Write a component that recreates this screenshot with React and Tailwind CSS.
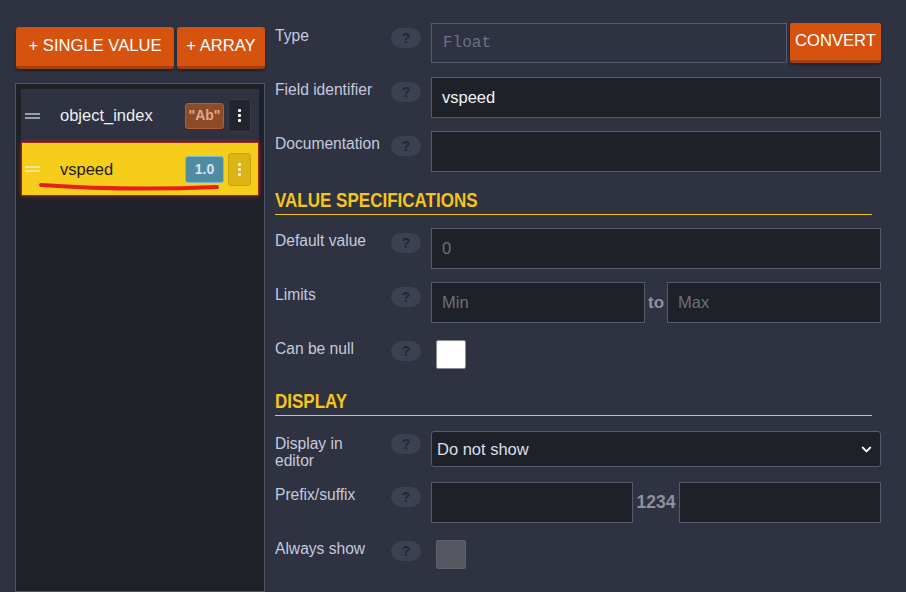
import React from "react";
import { ChevronDown } from "lucide-react";

function Pill({ className = "mt-[5px]" }) {
  return (
    <div
      className={
        "flex h-[20px] w-[30px] shrink-0 items-center justify-center rounded-full bg-[#3c4050] text-[14px] font-bold leading-none text-[#23262f] " +
        className
      }
    >
      ?
    </div>
  );
}

function Label({ children }) {
  return (
    <div className="w-[116px] shrink-0 pr-[5px] pt-[4px] text-[15.6px] leading-[17px] text-[#c5cadd]">
      {children}
    </div>
  );
}

function Input({ children, placeholder, className = "" }) {
  return (
    <div
      className={
        "flex h-[41px] items-center border border-[#555a70] bg-[#1f2129] px-[10px] text-[16.5px] " +
        className
      }
    >
      {children ? (
        <span className="text-[#f2f3f6]">{children}</span>
      ) : placeholder ? (
        <span className="text-[#6c6f78]">{placeholder}</span>
      ) : null}
    </div>
  );
}

function Heading({ children, className = "" }) {
  return (
    <div
      className={
        "mr-[9px] flex h-[30px] items-end border-b border-[#f5c51a] pb-[4px] " + className
      }
    >
      <span className="inline-block origin-bottom-left scale-x-[0.81] whitespace-nowrap text-[21px] font-bold leading-[20px] text-[#f5c51a]">
        {children}
      </span>
    </div>
  );
}

function Dots({ color }) {
  return (
    <div className="flex flex-col items-center gap-[2px]">
      <div className={"h-[3px] w-[3px] rounded-[1px] " + color} />
      <div className={"h-[3px] w-[3px] rounded-[1px] " + color} />
      <div className={"h-[3px] w-[3px] rounded-[1px] " + color} />
    </div>
  );
}

function Handle({ color }) {
  return (
    <div className="flex w-[15px] flex-col gap-[2px]">
      <div className={"h-[2px] w-full " + color} />
      <div className={"h-[2px] w-full " + color} />
    </div>
  );
}

export default function App() {
  return (
    <div className="flex h-[592px] w-[906px] overflow-hidden bg-[#2f3241] font-['Liberation_Sans',Arial,sans-serif]">
      {/* Left column */}
      <div className="ml-[15px] flex w-[250px] shrink-0 flex-col pt-[27px]">
        <div className="flex gap-[3px] pl-[1px]">
          <div className="flex h-[42px] w-[158px] items-center justify-center rounded-[3px] border-b-[3px] border-[#a5400c] bg-[#d5530f] text-[16.6px] text-white shadow-[0_2px_3px_rgba(0,0,0,0.35)]">
            + SINGLE VALUE
          </div>
          <div className="flex h-[42px] flex-1 items-center justify-center rounded-[3px] border-b-[3px] border-[#a5400c] bg-[#d5530f] text-[16.6px] text-white shadow-[0_2px_3px_rgba(0,0,0,0.35)]">
            + ARRAY
          </div>
        </div>
        <div className="mt-[14px] flex-1 border border-[#4d5369] bg-[#1f2129] p-[5px]">
          {/* item 1 */}
          <div className="flex h-[53px] items-center bg-[#2f3241] pl-[4px] pr-[8px]">
            <Handle color="bg-[#9b9ea8]" />
            <span className="ml-[20px] flex-1 text-[16.5px] text-[#eceef3]">object_index</span>
            <div className="flex h-[26px] w-[39px] items-center justify-center rounded-[3px] border border-[#b25c30] bg-[#8d4b28] text-[14px] font-bold text-[#dfa98b]">
              "Ab"
            </div>
            <div className="ml-[4px] flex h-[33px] w-[23px] items-center justify-center rounded-[3px] border border-[#393c48] bg-[#22252e]">
              <Dots color="bg-white" />
            </div>
          </div>
          {/* item 2 */}
          <div className="relative flex h-[54px] items-center border border-[#9a2a1c] bg-[#f6cd1a] pl-[3px] pr-[7px] shadow-[0_0_4px_rgba(210,40,30,0.7)]">
            <Handle color="bg-[#f6e391]" />
            <span className="ml-[20px] flex-1 text-[16.5px] text-[#1c1c1c]">vspeed</span>
            <div className="flex h-[27px] w-[39px] items-center justify-center rounded-[3px] border border-[#76bccf] bg-[#4f8ba1] text-[14px] font-bold text-[#d3e6ee]">
              1.0
            </div>
            <div className="ml-[4px] flex h-[33px] w-[23px] items-center justify-center rounded-[3px] border border-[#c9a20f] bg-[#dcb515]">
              <Dots color="bg-[#fff6cc]" />
            </div>
            <svg
              className="pointer-events-none absolute left-0 top-0"
              width="237"
              height="54"
              viewBox="0 0 237 54"
            >
              <path
                d="M19 42 Q 105 48 195 44"
                fill="none"
                stroke="#e51f1c"
                strokeWidth="4"
                strokeLinecap="round"
              />
            </svg>
          </div>
        </div>
      </div>

      {/* Right column */}
      <div className="ml-[10px] flex w-[606px] shrink-0 flex-col pt-[23px]">
        {/* Type */}
        <div className="flex h-[40px] items-start">
          <Label>Type</Label>
          <Pill />
          <div className="ml-[10px] flex h-[40px] flex-1 items-center border border-[#555a70] pl-[11px] font-['Liberation_Mono',monospace] text-[16px] text-[#6b7187]">
            Float
          </div>
          <div className="ml-[3px] flex h-[40px] w-[91px] items-center justify-center rounded-[2px] border-b-[3px] border-[#a5400c] bg-[#d5530f] text-[16.6px] text-white shadow-[0_2px_3px_rgba(0,0,0,0.35)]">
            CONVERT
          </div>
        </div>
        {/* Field identifier */}
        <div className="mt-[14px] flex items-start">
          <Label>Field identifier</Label>
          <Pill />
          <Input className="ml-[10px] flex-1">vspeed</Input>
        </div>
        {/* Documentation */}
        <div className="mt-[13px] flex items-start">
          <Label>Documentation</Label>
          <Pill />
          <Input className="ml-[10px] flex-1" />
        </div>

        <Heading className="mt-[13px]">VALUE SPECIFICATIONS</Heading>

        {/* Default value */}
        <div className="mt-[13px] flex items-start">
          <Label>Default value</Label>
          <Pill />
          <Input className="ml-[10px] flex-1" placeholder="0" />
        </div>
        {/* Limits */}
        <div className="mt-[13px] flex items-start">
          <Label>Limits</Label>
          <Pill />
          <div className="ml-[10px] flex flex-1 items-center">
            <Input className="flex-1" placeholder="Min" />
            <span className="mx-[3px] text-[17px] font-bold text-[#8d919d]">to</span>
            <Input className="flex-1" placeholder="Max" />
          </div>
        </div>
        {/* Can be null */}
        <div className="mt-[13px] flex h-[37px] items-start">
          <Label>Can be null</Label>
          <Pill />
          <div className="ml-[15px] mt-[4px] h-[29px] w-[30px] rounded-[2px] border border-[#8a8c92] bg-white" />
        </div>

        <Heading className="mt-[13px]">DISPLAY</Heading>

        {/* Display in editor */}
        <div className="mt-[15px] flex h-[36px] items-start">
          <Label>
            Display in
            <br />
            editor
          </Label>
          <Pill className="mt-[3px]" />
          <div className="ml-[10px] flex h-[36px] flex-1 items-center justify-between rounded-[3px] border border-[#555a70] bg-[#1f2129] pl-[5px] pr-[6px] text-[16.5px] text-[#dcdfe8]">
            <span>Do not show</span>
            <ChevronDown size={15} strokeWidth={3.2} className="text-white" />
          </div>
        </div>
        {/* Prefix/suffix */}
        <div className="mt-[15px] flex items-start">
          <Label>Prefix/suffix</Label>
          <Pill />
          <div className="ml-[10px] flex flex-1 items-center">
            <Input className="flex-1" />
            <span className="mx-[4px] text-[17.5px] font-bold text-[#8d919d]">1234</span>
            <Input className="flex-1" />
          </div>
        </div>
        {/* Always show */}
        <div className="mt-[13px] flex h-[37px] items-start">
          <Label>Always show</Label>
          <Pill />
          <div className="ml-[15px] mt-[4px] h-[29px] w-[30px] rounded-[2px] border border-[#5f626b] bg-[#54575f]" />
        </div>
      </div>
    </div>
  );
}
